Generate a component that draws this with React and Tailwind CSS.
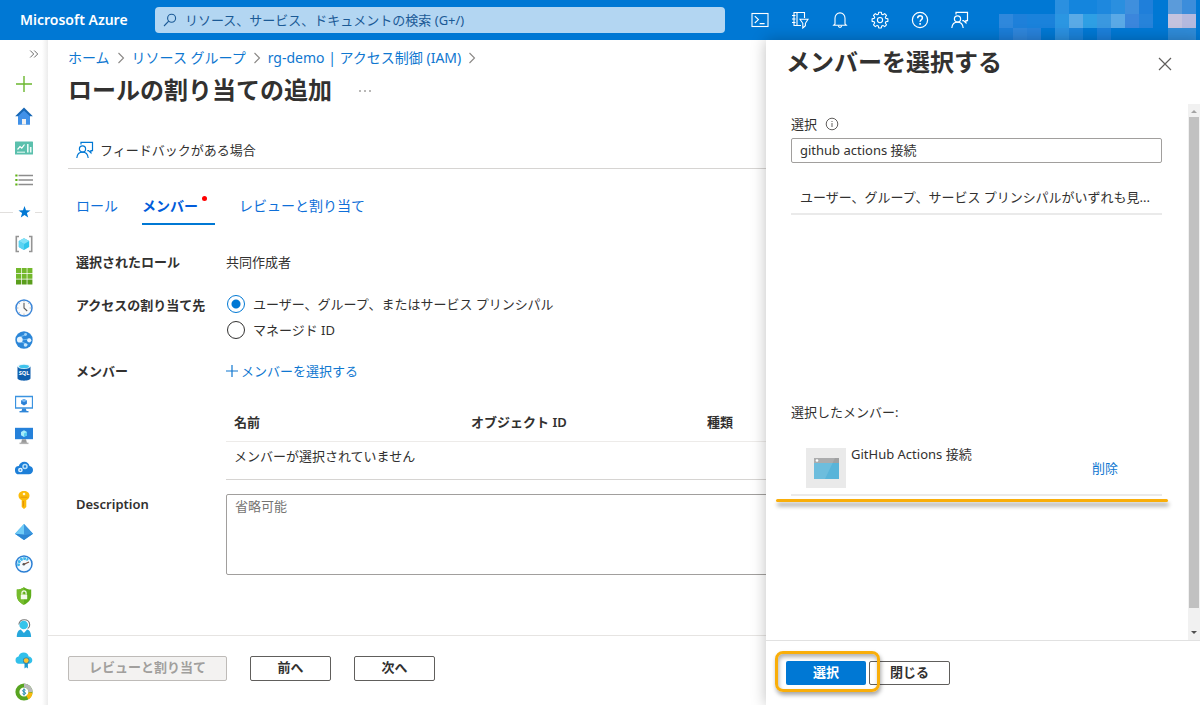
import React, { useState } from 'react';

const SearchIcon = () => (
  <svg viewBox="0 0 14 14" className="h-[14px] w-[14px]" fill="none" stroke="#1b5a96" strokeWidth="1.1">
    <circle cx="8.6" cy="5.2" r="4" />
    <path d="M5.7 8.2 1 13" />
  </svg>
);

const CloudShellIcon = () => (
  <svg viewBox="0 0 18 18" className="h-[18px] w-[18px]" fill="none" stroke="currentColor" strokeWidth="1.1">
    <rect x="1" y="2.5" width="16" height="13" />
    <path d="M3.8 5.2 7.4 8.6 3.8 12M8.6 12.6h5" />
  </svg>
);

const DirectoryFilterIcon = () => (
  <svg viewBox="0 0 18 18" className="h-[18px] w-[18px]" fill="none" stroke="currentColor" strokeWidth="1.1">
    <path d="M13.5 7V1.500H3v13h7M6 1.500v13M1 4.500h3.500M1 8h3.500M1 11.500h3.500" />
    <path d="M9 8.300h8l-2.600 4v2.400l-2.600 2.300v-4.700z" />
  </svg>
);

const BellIcon = () => (
  <svg viewBox="0 0 18 18" className="h-[18px] w-[18px]" fill="none" stroke="currentColor" strokeWidth="1.1">
    <path d="M4 13V7.2C4 4 6.200 1.900 9 1.900S14 4 14 7.200V13l1.300 1.300H2.700z" />
    <path d="M7.200 14.500c.2 1.300.9 1.900 1.800 1.900s1.600-.6 1.800-1.900" />
  </svg>
);

const GearIcon = () => (
  <svg viewBox="0 0 18 18" className="h-[18px] w-[18px]" fill="none" stroke="currentColor" strokeWidth="1.1" strokeLinejoin="round">
    <path d="M7.700 1.200h2.600l.4 2.100 1.200.5 1.800-1.200 1.800 1.800-1.200 1.800.5 1.200 2.100.4v2.600l-2.100.4-.5 1.200 1.200 1.800-1.800 1.800-1.800-1.200-1.200.5-.4 2.100H7.700l-.4-2.100-1.200-.5-1.800 1.200-1.800-1.800 1.200-1.800-.5-1.200-2.100-.4V7.800l2.100-.4.5-1.200-1.200-1.800 1.800-1.800 1.800 1.200 1.200-.5z" />
    <circle cx="9" cy="9.100" r="2.600" />
  </svg>
);

const HelpIcon = () => (
  <svg viewBox="0 0 18 18" className="h-[18px] w-[18px]" fill="none" stroke="currentColor" strokeWidth="1.2">
    <circle cx="9" cy="9" r="7.600" />
    <path d="M6.700 7.200c0-1.500 1-2.400 2.400-2.400s2.300.9 2.300 2.100c0 1.800-2.300 1.900-2.300 3.900" strokeWidth="1.500" />
    <path d="M9.100 12v1.700" strokeWidth="1.600" />
  </svg>
);

const FeedbackIcon = () => (
  <svg viewBox="0 0 18 18" className="h-[18px] w-[18px]" fill="none" stroke="currentColor" strokeWidth="1.2">
    <path d="M5 3.600V1.400h11.500v8.200h-1.600v2.200l-2.400-2.200h-1.200" />
    <circle cx="6.500" cy="8" r="3.100" />
    <path d="M.8 17c.4-3.700 2.500-5.900 5.700-5.900s5.300 2.200 5.700 5.900" />
  </svg>
);

const InfoIcon = () => (
  <svg viewBox="0 0 14 14" className="h-[14px] w-[14px]" fill="none" stroke="#605e5c">
    <circle cx="7" cy="7" r="5.800" />
    <path d="M7 6v4M7 4v1" />
  </svg>
);

const Chevron = () => (
  <svg viewBox="0 0 8 12" className="h-3 w-2 shrink-0" fill="none" stroke="#8a8886" strokeWidth="1.100">
    <path d="M1.500 1 6.500 6l-5 5" />
  </svg>
);

// Pixelated account area at the end of the top bar
const accountCells = [
  [56, 0, '#2b90e0'], [70, 0, '#1485dd'], [84, 0, '#1485dd'], [98, 0, '#1e88de'], [112, 0, '#2a8fdf'],
  [126, 0, '#3f8fdd'], [140, 0, '#1f7fda'], [169, 0, '#5b9bda'], [183, 0, '#3c8ddb'],
  [0, 14, '#2f88dc'], [14, 14, '#1e80da'], [28, 14, '#1a82db'], [42, 14, '#1a82db'], [56, 14, '#2b96e2'],
  [70, 14, '#5aaae6'], [84, 14, '#2e9fe4'], [98, 14, '#3a98e0'], [112, 14, '#5aa9e6'], [126, 14, '#3b86dc'],
  [140, 14, '#2683da'], [169, 14, '#c5c3de'], [183, 14, '#b5b9de'],
  [0, 28, '#1b7dd8'], [14, 28, '#2f86db'], [28, 28, '#2882da'], [56, 28, '#2b90e0'], [70, 28, '#1b83da'],
  [98, 28, '#1c7fda'], [169, 28, '#2f8bd8'], [183, 28, '#2f8bd8'],
];

const AccountMosaic = () => (
  <svg viewBox="0 0 201 40" className="h-10 w-[201px] shrink-0" shapeRendering="crispEdges">
    {accountCells.map(([x, y, fill]) => (
      <rect key={`${x}-${y}`} x={x} y={y} width="14" height="14" fill={fill} />
    ))}
  </svg>
);

const sideItems = [
  {
    label: 'リソースの作成',
    art: <path d="M9 1v16M1 9h16" stroke="#6bb72f" strokeWidth="1.400" fill="none" />,
  },
  {
    label: 'ホーム',
    art: (
      <>
        <path d="M3 8h12v9.500H3z" fill="#3f8fe6" />
        <path d="M9 .5 17.800 9.300H.2z" fill="#1767b5" />
        <path d="M9 3.500 15 9.300v8.200H3V9.300z" fill="#4191e8" />
        <path d="M7 12h4v5.500H7z" fill="#f0f0f0" />
      </>
    ),
  },
  {
    label: 'ダッシュボード',
    art: (
      <>
        <rect x="0" y="2.500" width="18" height="13" rx=".6" fill="#5bc0ad" />
        <path d="M2.500 10.500 5 7.500l1.800 1.700L9.500 5.500" stroke="#fff" strokeWidth="1.200" fill="none" />
        <path d="M2 13.200h8" stroke="#d5f2ec" strokeWidth="1.200" />
        <path d="M12.800 5v8.500M15.700 8v5.500" stroke="#e8faf6" strokeWidth="1.600" />
      </>
    ),
  },
  {
    label: 'すべてのサービス',
    art: (
      <>
        <path d="M3.500 4.500H18M3.500 9H18M3.500 13.500H18" stroke="#8d8d8d" strokeWidth="1.300" />
        <path d="M.3 3.400h2.200v2.200H.3zM.3 7.900h2.200v2.200H.3zM.3 12.400h2.200v2.200H.3z" fill="#5fb116" />
      </>
    ),
  },
  {
    label: 'お気に入り',
    divider: true,
    art: <path d="m9.500 3 1.500 4.300 4.500.1-3.600 2.700 1.300 4.400-3.700-2.600-3.700 2.600 1.300-4.400-3.600-2.700 4.500-.1z" fill="#0078d4" />,
  },
  {
    label: 'リソース グループ',
    art: (
      <>
        <path d="M4 1.500H1.300v15H4M14 1.500h2.700v15H14" stroke="#949494" strokeWidth="1.600" fill="none" />
        <path d="m9 3.200 5.200 2.900v6L9 15l-5.200-2.900v-6z" fill="#32c5ea" />
        <path d="m9 3.200 5.200 2.900L9 9 3.800 6.100z" fill="#84e2f7" />
        <path d="M9 9v6l-5.200-2.900v-6z" fill="#5cd3f2" />
      </>
    ),
  },
  {
    label: 'すべてのリソース',
    art: (
      <>
        <path d="M1 1h5v5H1zM6.700 1h5v5h-5zM12.400 1h5v5h-5zM1 6.700h5v5H1zM6.700 6.700h5v5h-5zM12.400 6.700h5v5h-5z" fill="#73b82c" />
        <path d="M1 12.400h5v5H1zM6.700 12.400h5v5h-5zM12.400 12.400h5v5h-5z" fill="#5a9e1c" />
      </>
    ),
  },
  {
    label: '最近',
    art: (
      <>
        <circle cx="9" cy="9" r="8" fill="#fafafa" stroke="#3c86d8" strokeWidth="1.500" />
        <path d="M9 4v5l3.200 3" stroke="#5a5a5a" strokeWidth="1.100" fill="none" />
        <path d="M9 2.300v1M9 14.700v1M2.300 9h1M14.700 9h1M4.300 4.300l.6.6M13.100 4.900l.6-.6M4.300 13.700l.6-.6" stroke="#999" />
      </>
    ),
  },
  {
    label: 'App Services',
    art: (
      <>
        <circle cx="9" cy="9" r="8.700" fill="#2b86d8" />
        <path d="M4 6.500 12 3M5 10l8 4M6 9l9-1" stroke="#6db7f0" strokeWidth="1.200" />
        <circle cx="4.800" cy="8.700" r="2.900" fill="#e6f3fd" />
        <circle cx="14.200" cy="9.300" r="2.100" fill="#e6f3fd" />
        <circle cx="10.500" cy="14" r="1.800" fill="#c6e5fb" />
        <circle cx="10.500" cy="3.500" r="1.400" fill="#9dd2f8" />
      </>
    ),
  },
  {
    label: 'SQL データベース',
    art: (
      <>
        <path d="M2.500 3.500v11.800c0 1.300 2.900 2.400 6.500 2.400s6.500-1.100 6.500-2.400V3.500z" fill="#0f5fae" />
        <ellipse cx="9" cy="3.300" rx="6.500" ry="2.600" fill="#e9f6fc" />
        <ellipse cx="9" cy="3.500" rx="5" ry="1.800" fill="#3fc3ec" />
        <text x="9" y="12.400" textAnchor="middle" fontSize="5.600" fontWeight="700" fill="#fff">SQL</text>
      </>
    ),
  },
  {
    label: 'Virtual Machines',
    art: (
      <>
        <path d="M.5 1.500h17V13H.5z" fill="#fff" stroke="#3b93e0" strokeWidth="1.300" />
        <path d="M7.300 13.500h3.400l1 3H6.300z" fill="#2f86d8" />
        <path d="M4.500 16h9v1.400h-9z" fill="#2f86d8" />
        <path d="m9 4 2.900 1.600v3.200L9 10.500 6.100 8.800V5.600z" fill="#2a80d6" />
        <path d="m9 4 2.900 1.600L9 7.200 6.100 5.600z" fill="#76b8f4" />
      </>
    ),
  },
  {
    label: 'ロード バランサー',
    art: (
      <>
        <path d="M0 .8h18v11.400H0z" fill="#2581da" />
        <path d="M7 12.200h4l1 4H6z" fill="#9a9a9a" />
        <path d="M4.500 15.600h9v1.500h-9z" fill="#b4b4b4" />
        <path d="m9 3.200 3 1.700v3.300L9 9.900 6 8.200V4.900z" fill="#a6ecfa" />
        <path d="M9 6.500 12 4.900v3.300L9 9.900z" fill="#56cdf0" />
      </>
    ),
  },
  {
    label: 'クラウド サービス',
    art: (
      <>
        <path d="M4.300 15.300a4.100 4.100 0 0 1-.5-8.200C4.500 4.500 6.700 2.700 9.300 2.700c2.700 0 4.700 1.700 5.200 4.300 2 .3 3.500 2 3.500 4.100 0 2.400-1.800 4.200-4.200 4.200z" fill="#1d7fd8" />
        <circle cx="10" cy="7.600" r="2" fill="none" stroke="#b8e0fa" strokeWidth="1.500" />
        <circle cx="5.400" cy="11" r="1.600" fill="none" stroke="#e1f2fe" strokeWidth="1.500" />
      </>
    ),
  },
  {
    label: 'キー コンテナー',
    art: (
      <>
        <path d="M9 0c3 0 5.500 1.600 5.500 4.700 0 2.200-1.500 3.700-3.200 4.400V16L9 18l-2.300-2V9.100C5 8.400 3.500 6.900 3.500 4.700 3.500 1.600 6 0 9 0z" fill="#fbbb09" />
        <circle cx="9" cy="3" r="1.300" fill="#fff6d2" />
        <path d="M8.300 10v5.500" stroke="#e38d08" strokeWidth="1.100" />
        <path d="M5.500 6.200h7" stroke="#e39a10" />
      </>
    ),
  },
  {
    label: 'Azure Active Directory',
    art: (
      <>
        <path d="M9 1 18 10.800 9 17 0 10.800z" fill="#3aa6e8" />
        <path d="M9 1v16L0 10.800z" fill="#6fcbf6" />
        <path d="M9 11.500 18 10.800 9 17 0 10.800z" fill="#2c84d2" />
        <path d="M9 1 18 10.800 9 12z" fill="#3c97de" />
      </>
    ),
  },
  {
    label: 'モニター',
    art: (
      <>
        <circle cx="9" cy="9" r="8" fill="#f3f9fe" stroke="#2b7fd4" strokeWidth="1.500" />
        <path d="M3.800 11A5.700 5.700 0 0 1 13 5" stroke="#3fb7ea" strokeWidth="2.800" fill="none" strokeDasharray="2.600 .6" />
        <path d="M8.500 9.500 14 7" stroke="#7a4b3b" strokeWidth="1.300" />
        <circle cx="8.800" cy="9.300" r="1.300" fill="#555" />
      </>
    ),
  },
  {
    label: 'Security Center',
    art: (
      <>
        <path d="M9 .3c2.200 1.600 4.500 2.200 7.200 2.300v5.800c0 4.500-3.500 7.500-7.200 9.400-3.700-1.900-7.200-4.900-7.200-9.400V2.600C4.500 2.500 6.800 1.900 9 .3z" fill="#5fae1c" />
        <path d="M9 .3v17.500c-3.700-1.900-7.200-4.900-7.200-9.400V2.600C4.500 2.500 6.800 1.900 9 .3z" fill="#76bc2d" />
        <rect x="5.800" y="7.500" width="6.400" height="4.800" rx=".6" fill="#f3faea" />
        <path d="M6.900 7.500V6a2.100 2.100 0 0 1 4.200 0v1.500" stroke="#f3faea" strokeWidth="1.200" fill="none" />
      </>
    ),
  },
  {
    label: 'ヘルプとサポート',
    art: (
      <>
        <path d="M3.800 5.500C4.300 2.500 6.300.8 9.200.8c3.200 0 5.300 2 5.500 5 .1 1.700-.6 3-2 3.800" stroke="#777" strokeWidth="1.100" fill="none" />
        <circle cx="8.700" cy="6" r="4.300" fill="#35c4ea" />
        <path d="M1.800 18c0-4.500 1.600-7 4-7.400L8.900 14l3.200-3.400c2.400.4 4 2.900 4 7.400z" fill="#26a7dc" />
      </>
    ),
  },
  {
    label: 'Advisor',
    art: (
      <>
        <path d="M3.800 12.700a3.700 3.700 0 0 1-.3-7.300C4.200 3 6.200 1.500 8.700 1.500c2.600 0 4.500 1.500 5 4 2 .2 3.600 1.600 3.600 3.700s-1.600 3.500-3.700 3.500z" fill="#32c0ea" />
        <path d="M9.500 12v5.500l1.700-1.200 1.700 1.200V12z" fill="#1f9ad0" />
        <circle cx="11.200" cy="9.600" r="3.200" fill="#3b7f9e" />
        <circle cx="11.200" cy="9.600" r="2.400" fill="#ffc52f" />
      </>
    ),
  },
  {
    label: 'コスト管理と請求',
    art: (
      <>
        <circle cx="9" cy="9" r="6.600" fill="#fff" stroke="#58a421" strokeWidth="4" />
        <path d="M9 2.400A6.600 6.600 0 0 1 15.600 9" stroke="#b9b9b9" strokeWidth="4" fill="none" />
        <path d="M15.600 9.500a6.600 6.600 0 0 1-3.300 5.100" stroke="#f9b90c" strokeWidth="4" fill="none" />
        <path d="M10.500 7.200c-.8-.8-2.900-.6-2.900.6 0 1.400 3 .9 3 2.400 0 1.200-2.200 1.500-3.100.5M9 5.500v7" stroke="#1c86a8" strokeWidth="1" fill="none" />
      </>
    ),
  },
];

const TopBar = () => {
  const tools = [
    ['Cloud Shell', CloudShellIcon],
    ['ディレクトリとサブスクリプション', DirectoryFilterIcon],
    ['通知', BellIcon],
    ['設定', GearIcon],
    ['ヘルプ', HelpIcon],
    ['フィードバック', FeedbackIcon],
  ];

  return (
    <header className="flex h-10 shrink-0 items-center bg-[#0078d4] text-white">
      <a href="#" className="w-[155px] shrink-0 pl-5 text-sm font-semibold">Microsoft Azure</a>
      <label className="flex h-[26px] min-w-0 flex-1 items-center gap-2 rounded-sm bg-[#b3d6f2] px-2">
        <SearchIcon />
        <input
          type="search"
          aria-label="検索"
          placeholder="リソース、サービス、ドキュメントの検索 (G+/)"
          className="min-w-0 flex-1 bg-transparent text-[13px] text-[#1b5a96] outline-none placeholder:text-[#1b5a96]"
        />
      </label>
      <nav className="ml-[15px] flex shrink-0">
        {tools.map(([label, Icon]) => (
          <button key={label} aria-label={label} className="flex h-10 w-10 items-center justify-center">
            <Icon />
          </button>
        ))}
      </nav>
      <div className="ml-[19px]">
        <AccountMosaic />
      </div>
    </header>
  );
};

const SideBar = () => (
  <aside className="flex w-12 shrink-0 overflow-hidden bg-white">
    <nav className="w-[42px] shrink-0">
      <button aria-label="メニューの展開" className="flex h-7 w-full items-center justify-end pr-[3px]">
        <svg viewBox="0 0 10 8" className="h-2 w-[10px]" fill="none" stroke="#6b6b6b">
          <path d="m1.200.5 3.500 3.500-3.500 3.500M5.200.5 8.700 4 5.200 7.500" />
        </svg>
      </button>
      {sideItems.map(({ label, divider, art }) => (
        <a key={label} href="#" aria-label={label} className="flex h-8 items-center">
          <span className={divider ? 'h-px w-[13px] bg-[#e1dfdd]' : 'w-[13px]'} />
          <svg viewBox="0 0 18 18" className="mx-[2px] h-[18px] w-[18px] shrink-0">{art}</svg>
          <span className={divider ? 'h-px flex-1 bg-[#e1dfdd]' : 'flex-1'} />
        </a>
      ))}
    </nav>
    <div className="flex-1 bg-gradient-to-r from-white to-[#ececec]" />
  </aside>
);

const Field = ({ label, htmlFor, className, children }) => (
  <div className={`flex ${className}`}>
    <div className="w-[150px] shrink-0 font-semibold">
      {htmlFor ? <label htmlFor={htmlFor}>{label}</label> : label}
    </div>
    <div className="min-w-0 flex-1">{children}</div>
  </div>
);

const RadioOption = ({ label, checked, onChange }) => (
  <label className="flex h-[26px] items-center gap-2 pl-px">
    <input
      type="radio"
      name="assignTo"
      checked={checked}
      onChange={onChange}
      className="h-[18px] w-[18px] appearance-none rounded-full border border-[#323130] bg-white checked:border-[#0078d4] checked:bg-[radial-gradient(circle,#0078d4_4px,#fff_5px)]"
    />
    {label}
  </label>
);

const RoleAssignment = () => {
  const [assignTo, setAssignTo] = useState('user');

  return (
    <main className="flex min-w-0 flex-1 flex-col bg-white">
      <div className="min-h-0 flex-1 overflow-hidden pl-5">
        {/* Breadcrumb */}
        <nav className="flex items-center gap-[7px] pt-2 text-sm text-[#0f77d0]">
          <a href="#">ホーム</a>
          <Chevron />
          <a href="#">リソース グループ</a>
          <Chevron />
          <a href="#">rg-demo | アクセス制御 (IAM)</a>
          <Chevron />
        </nav>
        <div className="mt-1.5 flex items-center gap-[26px]">
          <h1 className="text-2xl font-bold">ロールの割り当ての追加</h1>
          <button aria-label="その他">
            <svg viewBox="0 0 14 4" className="h-1 w-[14px]" fill="#605e5c">
              <circle cx="2" cy="3" r=".8" />
              <circle cx="7" cy="3" r=".8" />
              <circle cx="12" cy="3" r=".8" />
            </svg>
          </button>
        </div>

        {/* Command bar */}
        <div className="mt-[26px] flex h-[37px] items-center border-b border-[#d6d4d2] pl-2">
          <button className="flex items-center gap-[6px]">
            <span className="text-[#0078d4]"><FeedbackIcon /></span>
            フィードバックがある場合
          </button>
        </div>

        <div className="pl-2">
          {/* Tabs */}
          <div role="tablist" className="mt-[18px] flex h-[38px] gap-6 text-sm text-[#0f6fd8]">
            <button role="tab" aria-selected="false">ロール</button>
            <button role="tab" aria-selected="true" className="flex items-center border-y-2 border-t-transparent border-b-[#0078d4] pr-2 font-bold text-[#015cda]">
              メンバー
              <span className="mb-4 ml-1 h-[5px] w-[5px] rounded-full bg-[#f00]" />
            </button>
            <button role="tab" aria-selected="false">レビューと割り当て</button>
          </div>

          <Field label="選択されたロール" className="mt-[27px]">共同作成者</Field>
          <Field label="アクセスの割り当て先" className="mt-[23px]">
            <div className="-mt-1">
              <RadioOption
                label="ユーザー、グループ、またはサービス プリンシパル"
                checked={assignTo === 'user'}
                onChange={() => setAssignTo('user')}
              />
              <RadioOption
                label="マネージド ID"
                checked={assignTo === 'managed'}
                onChange={() => setAssignTo('managed')}
              />
            </div>
          </Field>
          <Field label="メンバー" className="mt-[18px]">
            <button className="flex items-center gap-[3px] text-[#0f77d0]">
              <svg viewBox="0 0 12 12" className="h-3 w-3" stroke="currentColor" strokeWidth="1.200">
                <path d="M6 0v12M0 6h12" />
              </svg>
              メンバーを選択する
            </button>
            <table className="mt-[22px] w-full table-fixed text-left">
              <thead>
                <tr className="h-[38px] border-b border-[#edebe9]">
                  <th className="w-[237px] pl-2 font-semibold">名前</th>
                  <th className="w-[236px] pl-2 font-semibold">オブジェクト ID</th>
                  <th className="pl-2 font-semibold">種類</th>
                </tr>
              </thead>
              <tbody>
                <tr className="h-[38px] border-b border-[#d6d4d2]">
                  <td colSpan={3} className="pb-2 pl-2">メンバーが選択されていません</td>
                </tr>
              </tbody>
            </table>
          </Field>
          <Field label="Description" htmlFor="description" className="mt-[14px]">
            <textarea
              id="description"
              placeholder="省略可能"
              className="block h-[81px] w-full resize-none rounded-xs border border-[#a19f9d] px-2 py-px placeholder:text-[#767472]"
            />
          </Field>
        </div>
      </div>

      <footer className="flex h-[70px] shrink-0 items-start gap-[23px] border-t border-[#e6e4e2] pt-5 pl-5 font-semibold">
        <button disabled className="h-[25px] w-[159px] rounded-xs border border-[#bebbb8] bg-[#f3f2f1] pb-[3px] text-[#a19f9d]">レビューと割り当て</button>
        <button className="h-[25px] w-[81px] rounded-xs border border-[#605e5c] pb-[3px]">前へ</button>
        <button className="h-[25px] w-[81px] rounded-xs border border-[#605e5c] pb-[3px]">次へ</button>
      </footer>
    </main>
  );
};

const MemberPanel = () => {
  const [query, setQuery] = useState('github actions 接続');

  return (
    <section className="absolute inset-y-0 right-0 flex w-[434px] flex-col bg-white shadow-[0_0_14px_rgba(0,0,0,0.25)]">
      <div className="flex h-16 shrink-0 items-start justify-between pt-1.5 pr-[28px] pl-5">
        <h2 className="text-2xl font-bold">メンバーを選択する</h2>
        <button aria-label="パネルを閉じる" className="mt-[11px]">
          <svg viewBox="0 0 14 14" className="h-[14px] w-[14px]" stroke="#605e5c" strokeWidth="1.200">
            <path d="m1 1 12 12M13 1 1 13" />
          </svg>
        </button>
      </div>

      <div className="flex min-h-0 flex-1">
        <div className="min-w-0 flex-1 overflow-hidden pt-[10px] pr-[26px] pl-[25px]">
          <div className="flex items-center gap-2">
            <label htmlFor="memberSearch">選択</label>
            <InfoIcon />
          </div>
          <input
            id="memberSearch"
            type="text"
            value={query}
            onChange={(e) => setQuery(e.target.value)}
            className="mt-1 block h-[25px] w-full rounded-xs border border-[#a19f9d] px-2 pb-[3px]"
          />
          <div className="mt-[19px] h-[220px]">
            <p className="border-b-2 border-[#eaeaea] pt-[5px] pb-[6px] pl-[9px] whitespace-nowrap">
              ユーザー、グループ、サービス プリンシパルがいずれも見...
            </p>
          </div>
          <p>選択したメンバー:</p>
          <div className="relative flex items-start border-b-2 border-[#eaeaea] pt-[22px] pb-[6px] pl-[15px]">
            <svg viewBox="0 0 40 40" className="mt-1 h-10 w-10 shrink-0">
              <path d="M0 0h40v40H0z" fill="#eaeaea" />
              <path d="M8 10h25v21H8z" fill="#59b4d9" />
              <path d="M8 10h25v5H8z" fill="#a0a1a2" />
              <path d="M8 10h21l-10 21H8z" fill="#fff" opacity=".12" />
              <circle cx="11" cy="12.500" r="1.300" fill="#fff" />
            </svg>
            <span className="ml-[5px] flex-1">GitHub Actions 接続</span>
            <button className="mt-[14px] mr-11 text-[#0f77d0]">削除</button>
            <span className="absolute -right-1.5 -bottom-2 -left-[15px] h-[3px] rounded-full bg-[#f9ae0a] shadow-[1px_4px_4px_rgba(0,0,0,0.4)]" />
          </div>
        </div>

        {/* Scroll bar */}
        <div className="flex w-3 shrink-0 flex-col items-center bg-[#f1f1f1]">
          <svg viewBox="0 0 12 13" className="h-[13px] w-3 shrink-0"><path d="m3 9 3-3 3 3z" fill="#a3a3a3" /></svg>
          <div className="w-[10px] flex-1 bg-[#c1c1c1]" />
          <svg viewBox="0 0 12 32" className="h-8 w-3 shrink-0"><path d="m3 23 3 3 3-3z" fill="#505050" /></svg>
        </div>
      </div>

      <footer className="flex h-[65px] shrink-0 items-start gap-[3px] border-t border-[#e1e1e1] pt-5 pl-5 font-semibold">
        <div className="relative">
          <button className="h-6 w-20 rounded-xs bg-[#0078d4] pb-[3px] text-white">選択</button>
          <span className="pointer-events-none absolute -top-[10px] -right-[14px] -bottom-[7px] -left-[11px] z-10 rounded-lg border-3 border-[#f9ae0a] shadow-[1px_3px_4px_rgba(0,0,0,0.35),inset_1px_3px_4px_rgba(0,0,0,0.3)]" />
        </div>
        <button className="h-6 w-[81px] rounded-xs border border-[#605e5c] pb-[3px]">閉じる</button>
      </footer>
    </section>
  );
};

const App = () => (
  <div className="flex h-screen flex-col overflow-hidden bg-white font-['Noto_Sans','Noto_Sans_CJK_JP',sans-serif] text-[13px] leading-5 text-[#323130]">
    <TopBar />
    <div className="relative flex min-h-0 flex-1">
      <SideBar />
      <RoleAssignment />
      <MemberPanel />
    </div>
  </div>
);

export default App;
